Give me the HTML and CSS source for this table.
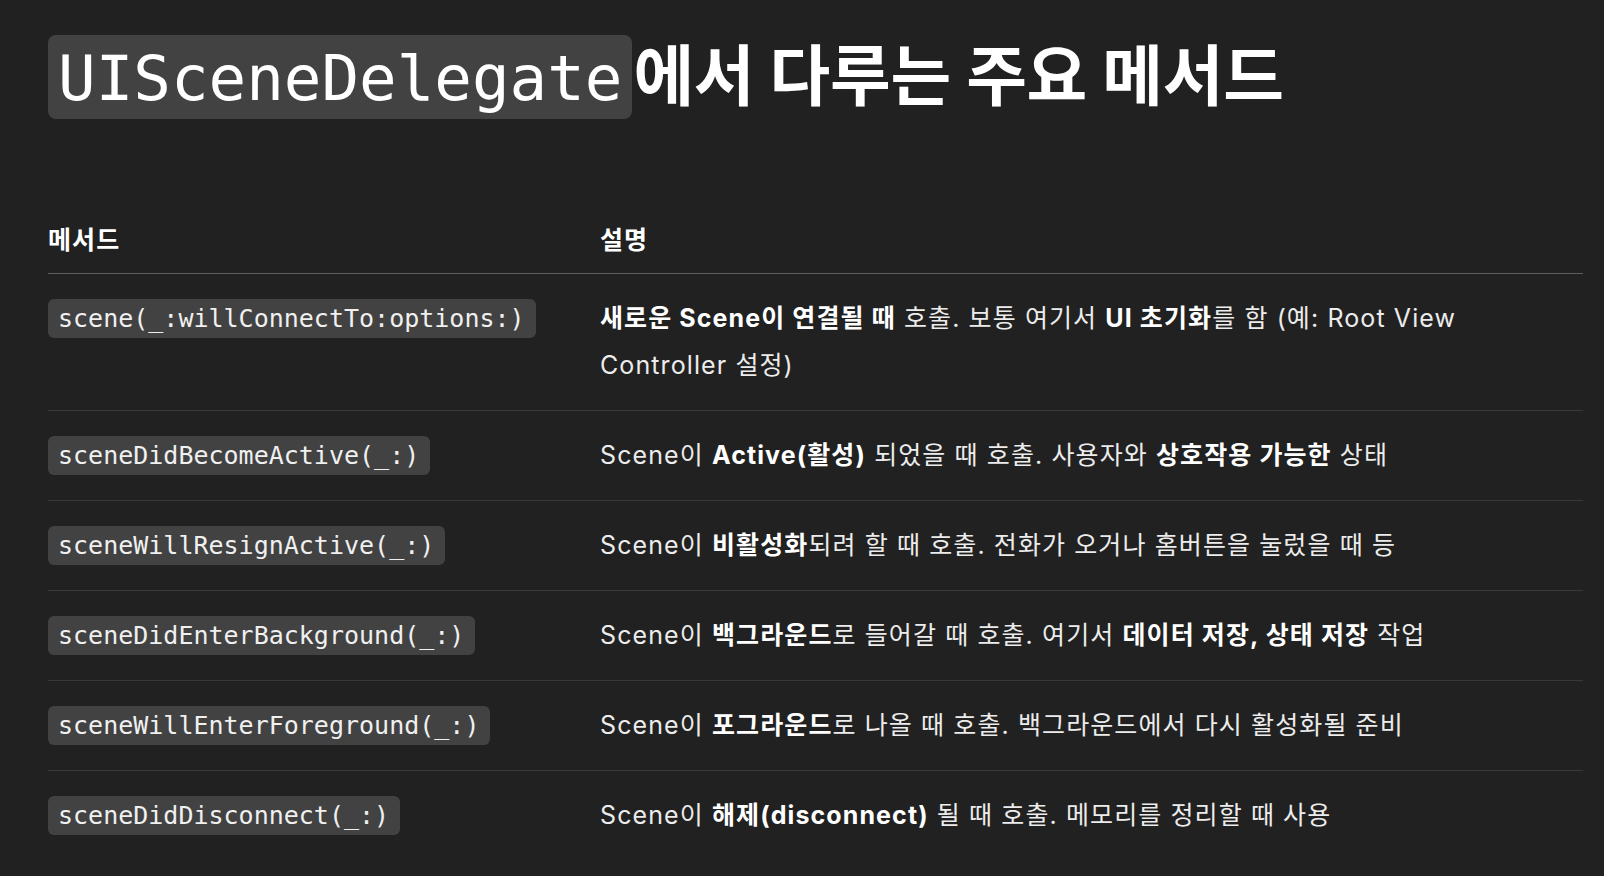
FILE: index.html
```html
<!DOCTYPE html>
<html lang="ko">
<head>
<meta charset="utf-8">
<title>UISceneDelegate 주요 메서드</title>
<link rel="stylesheet" href="styles.css">
</head>
<body>
<main class="doc">
  <h1 class="title"><code class="title-code">UISceneDelegate</code><span class="title-text">에서 다루는 주요 메서드</span></h1>
  <table class="methods">
    <colgroup><col class="col-method"><col class="col-desc"></colgroup>
    <thead>
      <tr><th>메서드</th><th>설명</th></tr>
    </thead>
    <tbody>
      <tr>
        <td><code class="pill">scene(_:willConnectTo:options:)</code></td>
        <td><strong>새로운 Scene이 연결될 때</strong> 호출. 보통 여기서 <strong>UI 초기화</strong>를 함 (예: Root View Controller 설정)</td>
      </tr>
      <tr>
        <td><code class="pill">sceneDidBecomeActive(_:)</code></td>
        <td>Scene이 <strong>Active(활성)</strong> 되었을 때 호출. 사용자와 <strong>상호작용 가능한</strong> 상태</td>
      </tr>
      <tr>
        <td><code class="pill">sceneWillResignActive(_:)</code></td>
        <td>Scene이 <strong>비활성화</strong>되려 할 때 호출. 전화가 오거나 홈버튼을 눌렀을 때 등</td>
      </tr>
      <tr>
        <td><code class="pill">sceneDidEnterBackground(_:)</code></td>
        <td>Scene이 <strong>백그라운드</strong>로 들어갈 때 호출. 여기서 <strong>데이터 저장, 상태 저장</strong> 작업</td>
      </tr>
      <tr>
        <td><code class="pill">sceneWillEnterForeground(_:)</code></td>
        <td>Scene이 <strong>포그라운드</strong>로 나올 때 호출. 백그라운드에서 다시 활성화될 준비</td>
      </tr>
      <tr>
        <td><code class="pill">sceneDidDisconnect(_:)</code></td>
        <td>Scene이 <strong>해제(disconnect)</strong> 될 때 호출. 메모리를 정리할 때 사용</td>
      </tr>
    </tbody>
  </table>
</main>
</body>
</html>
```

FILE: styles.css
```css
html, body {
  margin: 0;
  background: #212121;
}

body {
  color: #ececec;
  font-family: "Inter", "Noto Sans CJK KR", sans-serif;
}

.doc {
  padding: 35px 21px 0 48px;
}

.title {
  display: flex;
  align-items: baseline;
  margin: 0 0 98px;
  color: #ffffff;
  font-size: 66px;
  font-weight: 700;
}

.title-code {
  font-family: "DejaVu Sans Mono", monospace;
  font-size: 62.5px;
  font-weight: 400;
  line-height: 64px;
  padding: 12px 10px 8px;
  background: #424242;
  border-radius: 8px;
}

.title-text {
  line-height: 1;
  margin-left: 1px;
  letter-spacing: -0.3px;
}

.methods {
  width: 1535px;
  border-collapse: collapse;
  table-layout: fixed;
  font-size: 25px;
  letter-spacing: 1.1px;
  line-height: 47px;
}

.col-method {
  width: 552px;
}

.methods th {
  text-align: left;
  font-weight: 700;
  color: #ffffff;
  padding: 0 0 9px;
  border-bottom: 1px solid #5e5e5e;
}

.methods td {
  vertical-align: top;
  padding: 21px 0;
  border-bottom: 1px solid #383838;
}

.methods td + td {
  padding-right: 20px;
}

.methods tbody tr:last-child td {
  border-bottom: none;
}

.methods strong {
  font-weight: 700;
  color: #ffffff;
}

.pill {
  display: inline-block;
  font-family: "DejaVu Sans Mono", monospace;
  font-size: 25px;
  letter-spacing: 0;
  line-height: 25px;
  padding: 7px 11px 7px 10px;
  background: #424242;
  border-radius: 6px;
  color: #f0f0f0;
}
```
